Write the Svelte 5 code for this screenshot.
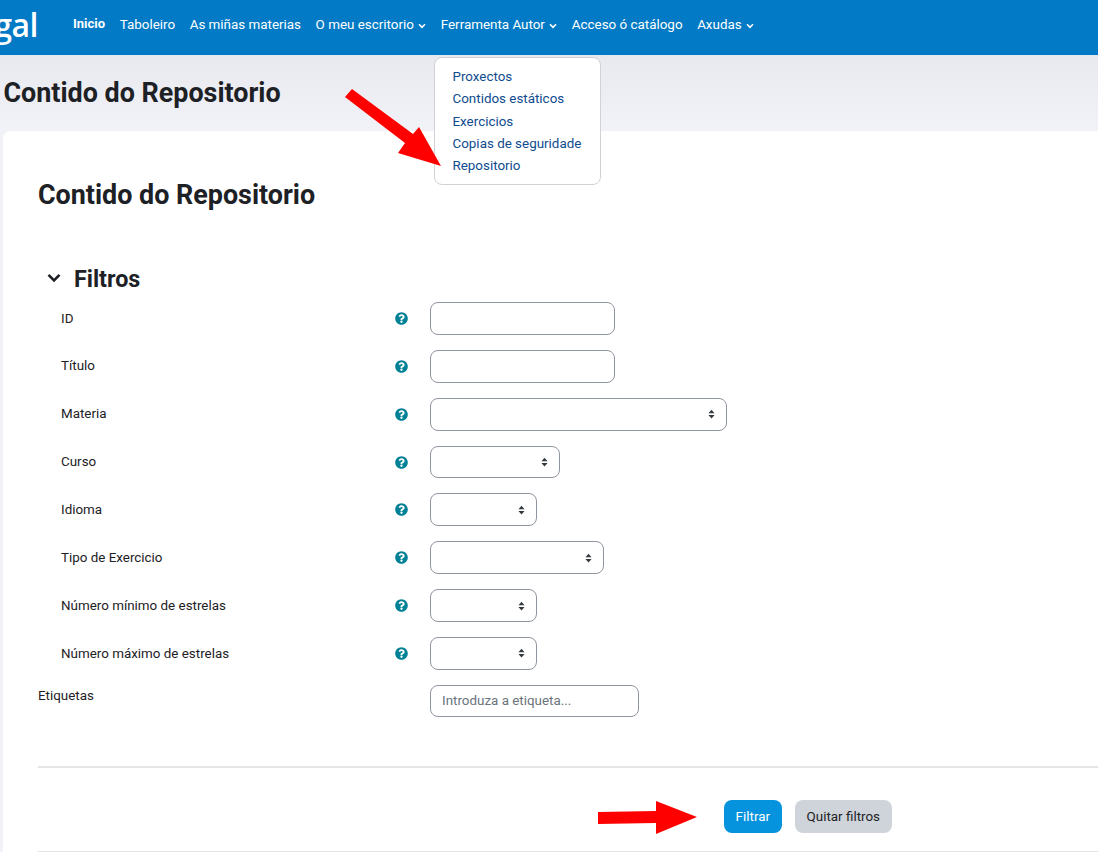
<script lang="ts">
  const navItems = [
    { label: 'Taboleiro' },
    { label: 'As miñas materias' },
    { label: 'O meu escritorio', caret: true },
    { label: 'Ferramenta Autor', caret: true },
    { label: 'Acceso ó catálogo' },
    { label: 'Axudas', caret: true }
  ];

  const menuItems = ['Proxectos', 'Contidos estáticos', 'Exercicios', 'Copias de seguridade', 'Repositorio'];

  const fields = [
    { label: 'ID', type: 'text', width: 185 },
    { label: 'Título', type: 'text', width: 185 },
    { label: 'Materia', type: 'select', width: 297 },
    { label: 'Curso', type: 'select', width: 130 },
    { label: 'Idioma', type: 'select', width: 107 },
    { label: 'Tipo de Exercicio', type: 'select', width: 174 },
    { label: 'Número mínimo de estrelas', type: 'select', width: 107 },
    { label: 'Número máximo de estrelas', type: 'select', width: 107 }
  ];

  const helpPath =
    'M504 256c0 136.997-111.043 248-248 248S8 392.997 8 256C8 119.083 119.043 8 256 8s248 111.083 248 248zM262.655 90c-54.497 0-89.255 22.957-116.549 63.758-3.536 5.286-2.353 12.415 2.715 16.258l34.699 26.31c5.205 3.947 12.621 3.008 16.665-2.122 17.864-22.658 30.113-35.797 57.303-35.797 20.429 0 45.698 13.148 45.698 32.958 0 14.976-12.363 22.667-32.534 33.976C247.128 238.528 216 254.941 216 296v4c0 6.627 5.373 12 12 12h56c6.627 0 12-5.373 12-12v-1.333c0-28.462 83.186-29.647 83.186-106.667 0-58.002-60.165-102-116.531-102zM256 338c-25.365 0-46 20.635-46 46 0 25.364 20.635 46 46 46s46-20.636 46-46c0-25.365-20.635-46-46-46z';
</script>

<div class="page">
  <header class="navbar">
    <div class="logo"><span>gal</span></div>
    <nav>
      <a class="active" href="#inicio">Inicio</a>
      {#each navItems as item}
        <a href="#nav">
          {item.label}
          {#if item.caret}
            <svg class="caret" width="8" height="6" viewBox="0 0 8 6"><path d="M1 1.3 4 4.3 7 1.3" fill="none" stroke="#fff" stroke-width="1.6" /></svg>
          {/if}
        </a>
      {/each}
    </nav>
  </header>

  <!-- menu aberto de Ferramenta Autor -->
  <ul class="dropdown">
    {#each menuItems as item}
      <li><a href="#menu">{item}</a></li>
    {/each}
  </ul>

  <h1 class="page-title">Contido do Repositorio</h1>

  <main class="card">
    <h2 class="card-title">Contido do Repositorio</h2>

    <div class="legend">
      <svg width="14" height="10" viewBox="0 0 14 10"><path d="M1.5 1.8 7 7.3 12.5 1.8" fill="none" stroke="#1d2125" stroke-width="2.6" /></svg>
      <h3>Filtros</h3>
    </div>

    <form>
      {#each fields as field}
        <div class="row">
          <label for={field.label}>{field.label}</label>
          <span class="help">
            <svg width="13" height="13" viewBox="0 0 512 512"><path d={helpPath} fill="#008196" /></svg>
          </span>
          {#if field.type === 'select'}
            <span class="select" style="width: {field.width}px">
              <select id={field.label}></select>
              <svg width="7" height="10" viewBox="0 0 8 11"><path d="M4 .5 7.5 4.5H.5ZM4 10.5.5 6.5H7.5Z" fill="#343a40" /></svg>
            </span>
          {:else}
            <input id={field.label} type="text" style="width: {field.width}px" />
          {/if}
        </div>
      {/each}

      <div class="row tags">
        <label for="tags">Etiquetas</label>
        <input id="tags" type="text" placeholder="Introduza a etiqueta..." />
      </div>

      <div class="actions">
        <button class="primary" type="button">Filtrar</button>
        <button class="secondary" type="button">Quitar filtros</button>
      </div>
    </form>
  </main>

  <!-- frechas da captura, por riba do contido -->
  <svg class="arrows" width="1098" height="852" viewBox="0 0 1098 852">
    <polygon points="345,97 352,89 413,134 419,127 441,166 398,153 405,143" fill="#fe0000" />
    <polygon points="598,812 656,811 656,801 697,817 656,834 656,823 598,824" fill="#fe0000" />
  </svg>
</div>

<style>
  :global(body) {
    margin: 0;
    background: #f1f2f7;
    overflow: hidden;
  }

  .page {
    position: relative;
    height: 852px;
    overflow: hidden;
    font-family: Roboto, "Liberation Sans", sans-serif;
    font-size: 13.4px;
    color: #1d2125;
    background: linear-gradient(#e8e9ee 55px, #f1f2f7 125px);
  }

  .navbar {
    display: flex;
    align-items: flex-start;
    height: 55px;
    background: #027ac5;
    box-sizing: border-box;
  }

  .logo {
    display: flex;
    justify-content: flex-end;
    width: 38px;
    height: 55px;
    overflow: hidden;
    flex: none;
  }

  .logo span {
    font-family: "Open Sans", sans-serif;
    font-size: 32px;
    font-weight: 600;
    line-height: 50px;
    color: #fff;
    letter-spacing: -0.5px;
  }

  nav {
    display: flex;
    gap: 14.6px;
    margin-left: 35px;
    padding-top: 17px;
  }

  nav a {
    color: #fff;
    text-decoration: none;
    line-height: 16px;
    white-space: nowrap;
  }

  nav a.active {
    font-size: 13px;
    font-weight: 700;
    margin-top: -1px;
  }

  .caret {
    margin-left: 1px;
    vertical-align: 0;
  }

  .dropdown {
    position: absolute;
    left: 434px;
    top: 57px;
    width: 167px;
    height: 128px;
    box-sizing: border-box;
    margin: 0;
    padding: 8px 0 0 17.5px;
    list-style: none;
    background: #fff;
    border: 1px solid #d0d2d8;
    border-radius: 8px;
    z-index: 2;
  }

  .dropdown li {
    height: 22.3px;
    line-height: 22px;
  }

  .dropdown a {
    color: #0f4c8f;
    text-decoration: none;
    white-space: nowrap;
  }

  .page-title {
    margin: 0;
    padding: 22px 0 0 3.5px;
    height: 54px;
    box-sizing: content-box;
    font-size: 26.9px;
    font-weight: 700;
    line-height: 32px;
  }

  .card {
    margin-left: 3px;
    height: 730px;
    padding: 48px 0 0 35px;
    box-sizing: border-box;
    background: #fff;
    border-radius: 8px 0 0 0;
  }

  .card-title {
    margin: 0;
    font-size: 26.9px;
    font-weight: 700;
    line-height: 32px;
  }

  .legend {
    display: flex;
    align-items: center;
    gap: 13px;
    margin: 51px 0 0 9px;
    height: 32px;
  }

  .legend h3 {
    margin: 2px 0 0;
    font-size: 23.3px;
    font-weight: 700;
    line-height: 32px;
  }

  form {
    margin-top: 8px;
  }

  .row {
    display: flex;
    align-items: flex-start;
    height: 32.85px;
    margin-bottom: 15px;
    padding-left: 23px;
  }

  .row label {
    width: 334px;
    flex: none;
    line-height: 16px;
    padding-top: 8.6px;
  }

  .help {
    display: flex;
    width: 35px;
    flex: none;
    margin-left: -0.5px;
    padding-top: 10px;
  }

  input,
  select {
    height: 32.85px;
    box-sizing: border-box;
    background: #fff;
    border: 1px solid #8f959e;
    border-radius: 8px;
    font: inherit;
    margin: 0 0 0 0.5px;
    padding: 0 11px;
    appearance: none;
    display: block;
  }

  input::placeholder {
    color: #6a737b;
    opacity: 1;
  }

  .select {
    position: relative;
    display: block;
  }

  .select select {
    width: 100%;
  }

  .select svg {
    position: absolute;
    right: 11.5px;
    top: 11.5px;
  }

  .tags {
    padding-left: 0;
    height: 32px;
    margin-bottom: 0;
  }

  .tags label {
    width: 392px;
    padding-top: 3px;
  }

  .tags input {
    width: 209px;
    height: 32px;
    margin-left: 0;
  }

  .actions {
    display: flex;
    gap: 13px;
    margin-top: 49.5px;
    padding: 31.5px 0 18px 686px;
    border-top: 2px solid #e5e5e5;
    border-bottom: 1px solid #e5e5e5;
    height: 33px;
    box-sizing: content-box;
  }

  button {
    height: 33px;
    padding: 0 11.6px;
    border: 0;
    border-radius: 8px;
    font: inherit;
  }

  .primary {
    background: #0593de;
    color: #fff;
  }

  .secondary {
    background: #ced4da;
    color: #1d2125;
    padding: 0 12px;
  }

  .arrows {
    position: absolute;
    left: 0;
    top: 0;
    z-index: 3;
    pointer-events: none;
  }
</style>
